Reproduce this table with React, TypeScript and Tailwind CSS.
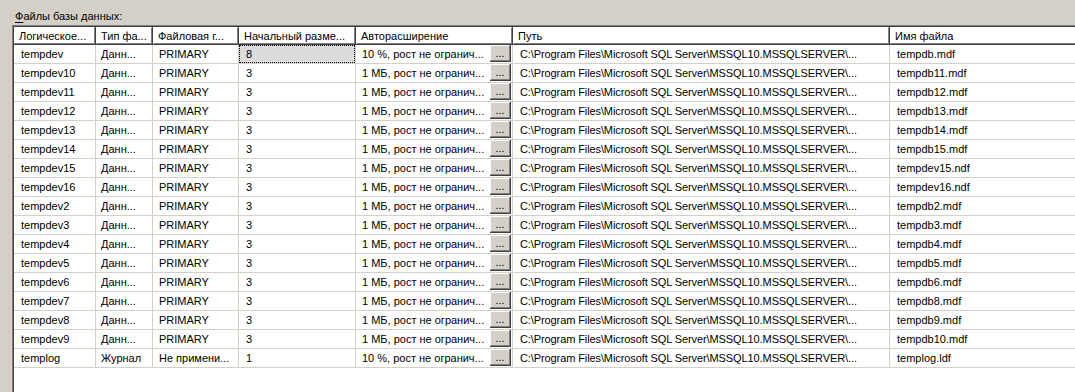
import React from "react";

const rows: [string, string, string, string, string, string][] = [
  ["tempdev", "Данн...", "PRIMARY", "8", "10 %, рост не огранич...", "tempdb.mdf"],
  ["tempdev10", "Данн...", "PRIMARY", "3", "1 МБ, рост не огранич...", "tempdb11.mdf"],
  ["tempdev11", "Данн...", "PRIMARY", "3", "1 МБ, рост не огранич...", "tempdb12.mdf"],
  ["tempdev12", "Данн...", "PRIMARY", "3", "1 МБ, рост не огранич...", "tempdb13.mdf"],
  ["tempdev13", "Данн...", "PRIMARY", "3", "1 МБ, рост не огранич...", "tempdb14.mdf"],
  ["tempdev14", "Данн...", "PRIMARY", "3", "1 МБ, рост не огранич...", "tempdb15.mdf"],
  ["tempdev15", "Данн...", "PRIMARY", "3", "1 МБ, рост не огранич...", "tempdev15.ndf"],
  ["tempdev16", "Данн...", "PRIMARY", "3", "1 МБ, рост не огранич...", "tempdev16.ndf"],
  ["tempdev2", "Данн...", "PRIMARY", "3", "1 МБ, рост не огранич...", "tempdb2.mdf"],
  ["tempdev3", "Данн...", "PRIMARY", "3", "1 МБ, рост не огранич...", "tempdb3.mdf"],
  ["tempdev4", "Данн...", "PRIMARY", "3", "1 МБ, рост не огранич...", "tempdb4.mdf"],
  ["tempdev5", "Данн...", "PRIMARY", "3", "1 МБ, рост не огранич...", "tempdb5.mdf"],
  ["tempdev6", "Данн...", "PRIMARY", "3", "1 МБ, рост не огранич...", "tempdb6.mdf"],
  ["tempdev7", "Данн...", "PRIMARY", "3", "1 МБ, рост не огранич...", "tempdb8.mdf"],
  ["tempdev8", "Данн...", "PRIMARY", "3", "1 МБ, рост не огранич...", "tempdb9.mdf"],
  ["tempdev9", "Данн...", "PRIMARY", "3", "1 МБ, рост не огранич...", "tempdb10.mdf"],
  ["templog", "Журнал", "Не примени...", "1", "10 %, рост не огранич...", "templog.ldf"],
];

const PATH = "C:\\Program Files\\Microsoft SQL Server\\MSSQL10.MSSQLSERVER\\...";

function HeaderCell({ w, children }: { w: string; children: React.ReactNode }) {
  return (
    <div className={`${w} shrink-0 h-[18px] border-r border-b border-[#404040]`}>
      <div className="h-full border-t border-l border-t-white border-l-white border-r border-b border-r-[#808080] border-b-[#808080] pl-[4px] leading-[16px] whitespace-nowrap overflow-hidden">
        {children}
      </div>
    </div>
  );
}

function Cell({ w, children, pl = "pl-[6px]" }: { w: string; children?: React.ReactNode; pl?: string }) {
  return (
    <div className={`${w} shrink-0 h-[19px] border-r border-b border-[#d4d0c8] ${pl} leading-[19px] whitespace-nowrap overflow-hidden`}>
      {children}
    </div>
  );
}

export default function App() {
  return (
    <div className="w-[1075px] h-[392px] bg-[#d4d0c8] overflow-hidden flex flex-col text-[11px] text-black font-['Liberation_Sans',Arial,sans-serif]">
      <div className="h-[25px] shrink-0 pl-[15px] pt-[10px] leading-[13px]">
        <span className="underline underline-offset-[2px]">Ф</span>айлы базы данных:
      </div>
      <div className="ml-[12px] flex-1 border-l border-t border-[#808080] w-[1200px]">
        <div className="h-full border-l border-t border-[#404040] bg-white">
          <div className="flex">
            <HeaderCell w="w-[82px]">Логическое...</HeaderCell>
            <HeaderCell w="w-[57px]">Тип фа...</HeaderCell>
            <HeaderCell w="w-[86px]">Файловая г...</HeaderCell>
            <HeaderCell w="w-[117px]">Начальный разме...</HeaderCell>
            <HeaderCell w="w-[157px]">Авторасширение</HeaderCell>
            <HeaderCell w="w-[377px]">Путь</HeaderCell>
            <HeaderCell w="w-[300px]">Имя файла</HeaderCell>
          </div>
          {rows.map((r, i) => (
            <div key={i} className="flex">
              <Cell w="w-[82px]" pl="pl-[7px]">{r[0]}</Cell>
              <Cell w="w-[57px]" pl="pl-[5px]">{r[1]}</Cell>
              <Cell w="w-[86px]">{r[2]}</Cell>
              {i === 0 ? (
                <div className="w-[117px] shrink-0 h-[19px] border-r border-b border-[#d4d0c8]">
                  <div className="h-full border border-dotted border-black bg-[#dcdcdc] pl-[6px] leading-[17px]">
                    {r[3]}
                  </div>
                </div>
              ) : (
                <Cell w="w-[117px]" pl="pl-[7px]">{r[3]}</Cell>
              )}
              <div className="w-[157px] shrink-0 h-[19px] border-r border-b border-[#d4d0c8] flex items-stretch">
                <div className="flex-1 pl-[6px] leading-[19px] whitespace-nowrap overflow-hidden">{r[4]}</div>
                <div className="w-[21px] mr-[1px] mb-[1px] border-r border-b border-[#404040]">
                  <div className="h-full bg-[#d4d0c8] border-t border-l border-t-white border-l-white border-r border-b border-r-[#808080] border-b-[#808080] flex items-end justify-center leading-[12px] pb-[1px]">
                    ...
                  </div>
                </div>
              </div>
              <Cell w="w-[377px]" pl="pl-[7px]">
                <span className="tracking-[-0.1px]">{PATH}</span>
              </Cell>
              <Cell w="w-[300px]" pl="pl-[7px]">{r[5]}</Cell>
            </div>
          ))}
        </div>
      </div>
    </div>
  );
}
